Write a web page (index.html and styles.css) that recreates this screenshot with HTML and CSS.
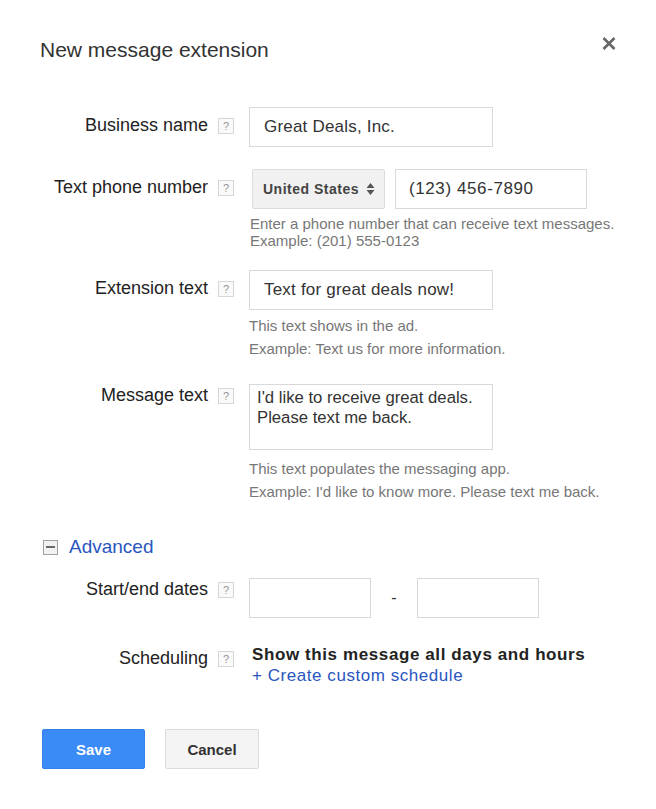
FILE: index.html
```html
<!DOCTYPE html>
<html lang="en">
<head>
<meta charset="utf-8">
<title>New message extension</title>
<link rel="stylesheet" href="styles.css">
</head>
<body>
<div class="dialog">
  <div class="head">
    <h1 class="title">New message extension</h1>
    <button class="close" aria-label="Close">
      <svg width="14" height="13" viewBox="0 0 14 13"><path d="M1.5 1 L12.5 12 M12.5 1 L1.5 12" stroke="#676767" stroke-width="2.6" stroke-linecap="butt" fill="none"/></svg>
    </button>
  </div>

  <div class="form">
    <div class="row r-biz">
      <div class="lab pt8"><span class="ltext">Business name</span><span class="help">?</span></div>
      <div class="field"><input class="inp" type="text" value="Great Deals, Inc."></div>
    </div>

    <div class="row r-phone">
      <div class="lab pt8"><span class="ltext">Text phone number</span><span class="help">?</span></div>
      <div class="field">
        <div class="phone-line">
          <div class="select"><span>United States</span>
            <svg width="9" height="14" viewBox="0 0 9 14"><path d="M4.5 1 L8.5 6 L0.5 6 Z M0.5 8 L8.5 8 L4.5 13 Z" fill="#555"/></svg>
          </div>
          <input class="inp phone" type="text" value="(123) 456-7890">
        </div>
        <p class="hint tight">Enter a phone number that can receive text messages.<br>Example: (201) 555-0123</p>
      </div>
    </div>

    <div class="row r-ext">
      <div class="lab pt8"><span class="ltext">Extension text</span><span class="help">?</span></div>
      <div class="field">
        <input class="inp" type="text" value="Text for great deals now!">
        <div class="hints h-ext">
          <p class="hint">This text shows in the ad.</p>
          <p class="hint">Example: Text us for more information.</p>
        </div>
      </div>
    </div>

    <div class="row r-msg">
      <div class="lab pt1"><span class="ltext">Message text</span><span class="help">?</span></div>
      <div class="field">
        <textarea class="area">I'd like to receive great deals.
Please text me back.</textarea>
        <div class="hints h-msg">
          <p class="hint">This text populates the messaging app.</p>
          <p class="hint">Example: I'd like to know more. Please text me back.</p>
        </div>
      </div>
    </div>

    <div class="advanced">
      <span class="minus"><span class="bar"></span></span>
      <a class="adv-link" href="#">Advanced</a>
    </div>

    <div class="row r-dates">
      <div class="lab pt1"><span class="ltext">Start/end dates</span><span class="help">?</span></div>
      <div class="field dates">
        <input class="inp date" type="text" value="">
        <span class="dash">-</span>
        <input class="inp date" type="text" value="">
      </div>
    </div>

    <div class="row r-sched">
      <div class="lab pt4"><span class="ltext">Scheduling</span><span class="help">?</span></div>
      <div class="field sched">
        <div class="sched-text">Show this message all days and hours</div>
        <a class="sched-link" href="#">+ Create custom schedule</a>
      </div>
    </div>
  </div>

  <div class="actions">
    <button class="btn save">Save</button>
    <button class="btn cancel">Cancel</button>
  </div>
</div>
</body>
</html>
```

FILE: styles.css
```css
* { box-sizing: border-box; }

html, body {
  margin: 0;
  padding: 0;
  background: #ffffff;
}

body {
  font-family: "Liberation Sans", Arial, sans-serif;
  color: #222;
}

.dialog {
  padding: 38px 40px 0 40px;
}

.head {
  display: flex;
  justify-content: space-between;
  align-items: flex-start;
}

.title {
  margin: 0;
  font-size: 21px;
  line-height: 24px;
  font-weight: normal;
  color: #333;
}

.close {
  border: 0;
  background: none;
  padding: 0;
  margin-top: -1px;
  width: 14px;
  height: 13px;
  display: block;
}
.close svg { display: block; }

.form {
  margin-top: 45px;
}

.row {
  display: flex;
  align-items: flex-start;
}

.lab {
  width: 194px;
  flex: none;
  display: flex;
  justify-content: flex-end;
  align-items: flex-start;
  gap: 10px;
}
.pt8 { padding-top: 8px; }
.pt4 { padding-top: 4px; }
.pt1 { padding-top: 1px; }

.ltext {
  font-size: 18px;
  line-height: 20px;
  color: #222;
  white-space: nowrap;
}

.help {
  width: 16px;
  height: 16px;
  margin-top: 3px;
  border: 1px solid #d6d6d6;
  background: #fafafa;
  color: #959595;
  font-size: 11px;
  line-height: 14px;
  text-align: center;
  flex: none;
}

.field {
  margin-left: 15px;
}

.inp {
  display: block;
  width: 244px;
  height: 40px;
  border: 1px solid #d9d9d9;
  border-radius: 0;
  padding: 0 0 0 14px;
  margin: 0;
  font-family: "Liberation Sans", Arial, sans-serif;
  font-size: 17px;
  letter-spacing: 0.2px;
  color: #333;
  background: #fff;
  outline: none;
}

.r-phone { margin-top: 22px; }
.r-ext { margin-top: 21px; }
.r-msg { margin-top: 24px; }
.r-dates { margin-top: 20px; }
.r-sched { margin-top: 26px; }

.phone-line {
  display: flex;
  gap: 10px;
}

.select {
  width: 133px;
  height: 40px;
  margin-left: 3px;
  background: #f1f1f1;
  border: 1px solid #dcdcdc;
  border-radius: 2px;
  display: flex;
  align-items: center;
  justify-content: space-between;
  padding: 0 9px 0 10px;
  font-size: 14px;
  font-weight: bold;
  letter-spacing: 0.5px;
  color: #444;
}
.select svg { display: block; }

.inp.phone {
  width: 192px;
  padding-left: 13px;
  letter-spacing: 0.6px;
}

.hint {
  margin: 0;
  font-size: 15px;
  color: #777;
  line-height: 23px;
  white-space: nowrap;
}
.hint.tight {
  line-height: 17px;
  margin-top: 6px;
  margin-left: 1px;
}

.h-ext { margin-top: 4px; }
.h-msg { margin-top: 7px; }

.area {
  display: block;
  width: 244px;
  height: 66px;
  border: 1px solid #d9d9d9;
  padding: 3px 7px;
  margin: 0;
  font-family: "Liberation Sans", Arial, sans-serif;
  font-size: 16.7px;
  line-height: 20px;
  color: #333;
  resize: none;
  overflow: hidden;
  outline: none;
}

.advanced {
  margin-top: 33px;
  display: flex;
  align-items: center;
  height: 22px;
}

.minus {
  width: 15px;
  height: 15px;
  margin-left: 3px;
  border: 1px solid #a0a0a0;
  background: #f2f2f2;
  display: flex;
  align-items: center;
  justify-content: center;
}
.minus .bar {
  width: 9px;
  height: 2px;
  background: #6a6a6a;
}

.adv-link {
  margin-left: 11px;
  font-size: 19px;
  line-height: 22px;
  color: #2a56c0;
  text-decoration: none;
}

.dates {
  display: flex;
  align-items: center;
}
.inp.date {
  width: 122px;
}
.dash {
  width: 46px;
  text-align: center;
  font-size: 16px;
  color: #333;
}

.sched { margin-left: 18px; }
.sched-text {
  font-size: 17px;
  line-height: 21px;
  font-weight: bold;
  letter-spacing: 0.6px;
  color: #222;
  white-space: nowrap;
}
.sched-link {
  display: block;
  font-size: 17px;
  line-height: 21px;
  letter-spacing: 0.55px;
  color: #2a56c0;
  text-decoration: none;
}

.actions {
  margin-top: 43px;
  margin-left: 2px;
  display: flex;
  gap: 20px;
}

.btn {
  height: 40px;
  border-radius: 2px;
  font-family: "Liberation Sans", Arial, sans-serif;
  font-size: 15px;
  font-weight: bold;
  padding: 0;
}
.save {
  width: 103px;
  background: #3b8bf6;
  border: 1px solid #3580e8;
  color: #fff;
}
.cancel {
  width: 94px;
  background: #f4f4f4;
  border: 1px solid #dadada;
  color: #333;
}
```
